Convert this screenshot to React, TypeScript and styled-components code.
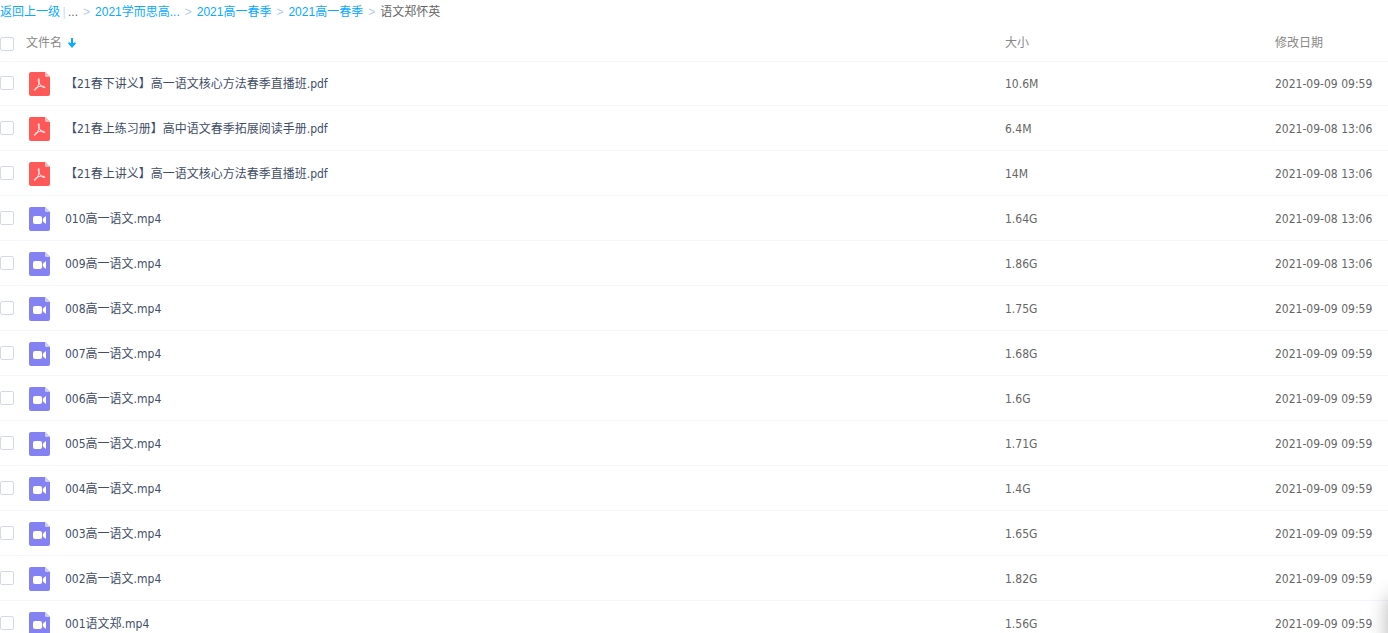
import React from "react";
import styled, { createGlobalStyle } from "styled-components";

const GlobalStyle = createGlobalStyle`
  * { box-sizing: border-box; }
  body {
    margin: 0;
    background: #fff;
    font: 12px/18px "DejaVu Sans Condensed", "Noto Sans CJK SC", sans-serif;
    color: #666;
  }
`;

const Page = styled.div`
  height: 100vh;
  overflow-x: hidden;
  overflow-y: auto;
  scrollbar-width: none;
`;

const Breadcrumb = styled.nav`
  display: flex;
  align-items: center;
  height: 24px;
  white-space: nowrap;
  font-family: "Liberation Sans", "Noto Sans CJK SC", sans-serif;
`;

const Crumb = styled.a`
  color: #09aaff;
  text-decoration: none;
  &:hover { text-decoration: underline; }
`;

const Divider = styled.span`
  width: 8px;
  text-align: center;
  color: #c4dbfe;
`;

const Separator = styled.span`
  width: 17px;
  text-align: center;
  color: #b4cbee;
`;

const FileTable = styled.table`
  width: 100%;
  table-layout: fixed;
  border-collapse: separate;
  border-spacing: 0;
`;

const Col = styled.col<{ $width?: number }>`
  width: ${(p) => (p.$width ? `${p.$width}px` : "auto")};
`;

const HeadCell = styled.th<{ $check?: boolean }>`
  height: 37px;
  padding: ${(p) => (p.$check ? "2px 0 0" : "0")};
  text-align: left;
  font-weight: 400;
  color: #888;
`;

const FileRows = styled.tbody`
  tr:first-child td {
    border-top: 1px solid #f2f6fd;
    padding-top: 0;
  }
  tr:first-child td:first-child {
    padding-bottom: 2px;
  }
`;

const Cell = styled.td`
  height: 45px;
  padding: 2px 0 0;
  border-bottom: 1px solid #f2f6fd;
  white-space: nowrap;
`;

const CheckCell = styled(Cell)`
  padding-top: 0;
`;

const Checkbox = styled.input`
  appearance: none;
  display: block;
  width: 14px;
  height: 14px;
  margin: 0;
  border: 1px solid #d3dae6;
  border-radius: 2px;
  background: #fff;
  cursor: pointer;
  &:checked { background: #09aaff; border-color: #09aaff; }
`;

const SortButton = styled.button`
  display: flex;
  align-items: center;
  gap: 5px;
  padding: 0;
  border: 0;
  background: none;
  font: inherit;
  color: inherit;
  cursor: pointer;
`;

const FileEntry = styled.div`
  display: flex;
  align-items: center;
  gap: 15px;
  padding-left: 3px;
`;

const FileLink = styled.a`
  color: #424e67;
  text-decoration: none;
  &:hover { color: #09aaff; }
`;

const Drawer = styled.aside`
  position: fixed;
  right: -20px;
  bottom: -20px;
  width: 20px;
  height: 56px;
  box-shadow: 0 0 20px rgba(0, 0, 0, 0.3);
`;

const SortArrow = () => (
  <svg width="10" height="10" viewBox="0 0 10 10" fill="#09aaff" aria-hidden="true">
    <path d="M4 0H6V5L8.2 4.2L9 5.4L5 10L1 5.4L1.8 4.2L4 5Z" />
  </svg>
);

const PdfIcon = () => (
  <svg width="21" height="24" viewBox="0 0 21 24" aria-hidden="true">
    <path d="M2 0H16L21 5V22Q21 24 19 24H2Q0 24 0 22V2Q0 0 2 0Z" fill="#ff5858" />
    <path d="M16 0L21 5H17.5Q16 5 16 3.5Z" fill="#ffbcbc" />
    <path
      d="M9.7 6.5C8.6 6.7 9.3 9.5 10.2 11.3C11.4 13.7 13.8 15.8 15.6 15.6C16.6 15 14.8 14 12.3 14.1C9.2 14.3 5.3 16.4 5.2 18C5.6 19.1 7.4 17.2 8.8 14.6C10.1 12 11.1 6.7 9.7 6.5Z"
      fill="none" stroke="#fff" strokeWidth="0.9" strokeLinejoin="round"
    />
  </svg>
);

const VideoIcon = () => (
  <svg width="21" height="24" viewBox="0 0 21 24" aria-hidden="true">
    <path d="M2 0H16L21 5V22Q21 24 19 24H2Q0 24 0 22V2Q0 0 2 0Z" fill="#8482f2" />
    <path d="M16 0L21 5H17.5Q16 5 16 3.5Z" fill="#cfceff" />
    <rect x="4" y="9" width="9" height="8" rx="2" fill="#fff" />
    <path d="M17 9V17Q13.6 15 13.6 13Q13.6 11 17 9Z" fill="#fff" />
  </svg>
);

const crumbs = ["2021学而思高...", "2021高一春季", "2021高一春季"];

const files = [
  ["【21春下讲义】高一语文核心方法春季直播班.pdf", "10.6M", "2021-09-09 09:59"],
  ["【21春上练习册】高中语文春季拓展阅读手册.pdf", "6.4M", "2021-09-08 13:06"],
  ["【21春上讲义】高一语文核心方法春季直播班.pdf", "14M", "2021-09-08 13:06"],
  ["010高一语文.mp4", "1.64G", "2021-09-08 13:06"],
  ["009高一语文.mp4", "1.86G", "2021-09-08 13:06"],
  ["008高一语文.mp4", "1.75G", "2021-09-09 09:59"],
  ["007高一语文.mp4", "1.68G", "2021-09-09 09:59"],
  ["006高一语文.mp4", "1.6G", "2021-09-09 09:59"],
  ["005高一语文.mp4", "1.71G", "2021-09-09 09:59"],
  ["004高一语文.mp4", "1.4G", "2021-09-09 09:59"],
  ["003高一语文.mp4", "1.65G", "2021-09-09 09:59"],
  ["002高一语文.mp4", "1.82G", "2021-09-09 09:59"],
  ["001语文郑.mp4", "1.56G", "2021-09-09 09:59"],
];

export default function App() {
  return (
    <>
      <GlobalStyle />
      <Page>
        <Breadcrumb>
          <Crumb href="#">返回上一级</Crumb>
          <Divider>|</Divider>
          <span>...</span>
          {crumbs.map((name, i) => (
            <React.Fragment key={i}>
              <Separator>&gt;</Separator>
              <Crumb href="#">{name}</Crumb>
            </React.Fragment>
          ))}
          <Separator>&gt;</Separator>
          <span>语文郑怀英</span>
        </Breadcrumb>
        <FileTable>
          <colgroup>
            <Col $width={26} />
            <Col />
            <Col $width={270} />
            <Col $width={113} />
          </colgroup>
          <thead>
            <tr>
              <HeadCell $check><Checkbox type="checkbox" aria-label="全选" /></HeadCell>
              <HeadCell><SortButton type="button">文件名<SortArrow /></SortButton></HeadCell>
              <HeadCell>大小</HeadCell>
              <HeadCell>修改日期</HeadCell>
            </tr>
          </thead>
          <FileRows>
            {files.map(([name, size, date]) => (
              <tr key={name}>
                <CheckCell><Checkbox type="checkbox" aria-label={name} /></CheckCell>
                <Cell>
                  <FileEntry>
                    {name.endsWith(".pdf") ? <PdfIcon /> : <VideoIcon />}
                    <FileLink href="#">{name}</FileLink>
                  </FileEntry>
                </Cell>
                <Cell>{size}</Cell>
                <Cell>{date}</Cell>
              </tr>
            ))}
          </FileRows>
        </FileTable>
      </Page>
      <Drawer />
    </>
  );
}
